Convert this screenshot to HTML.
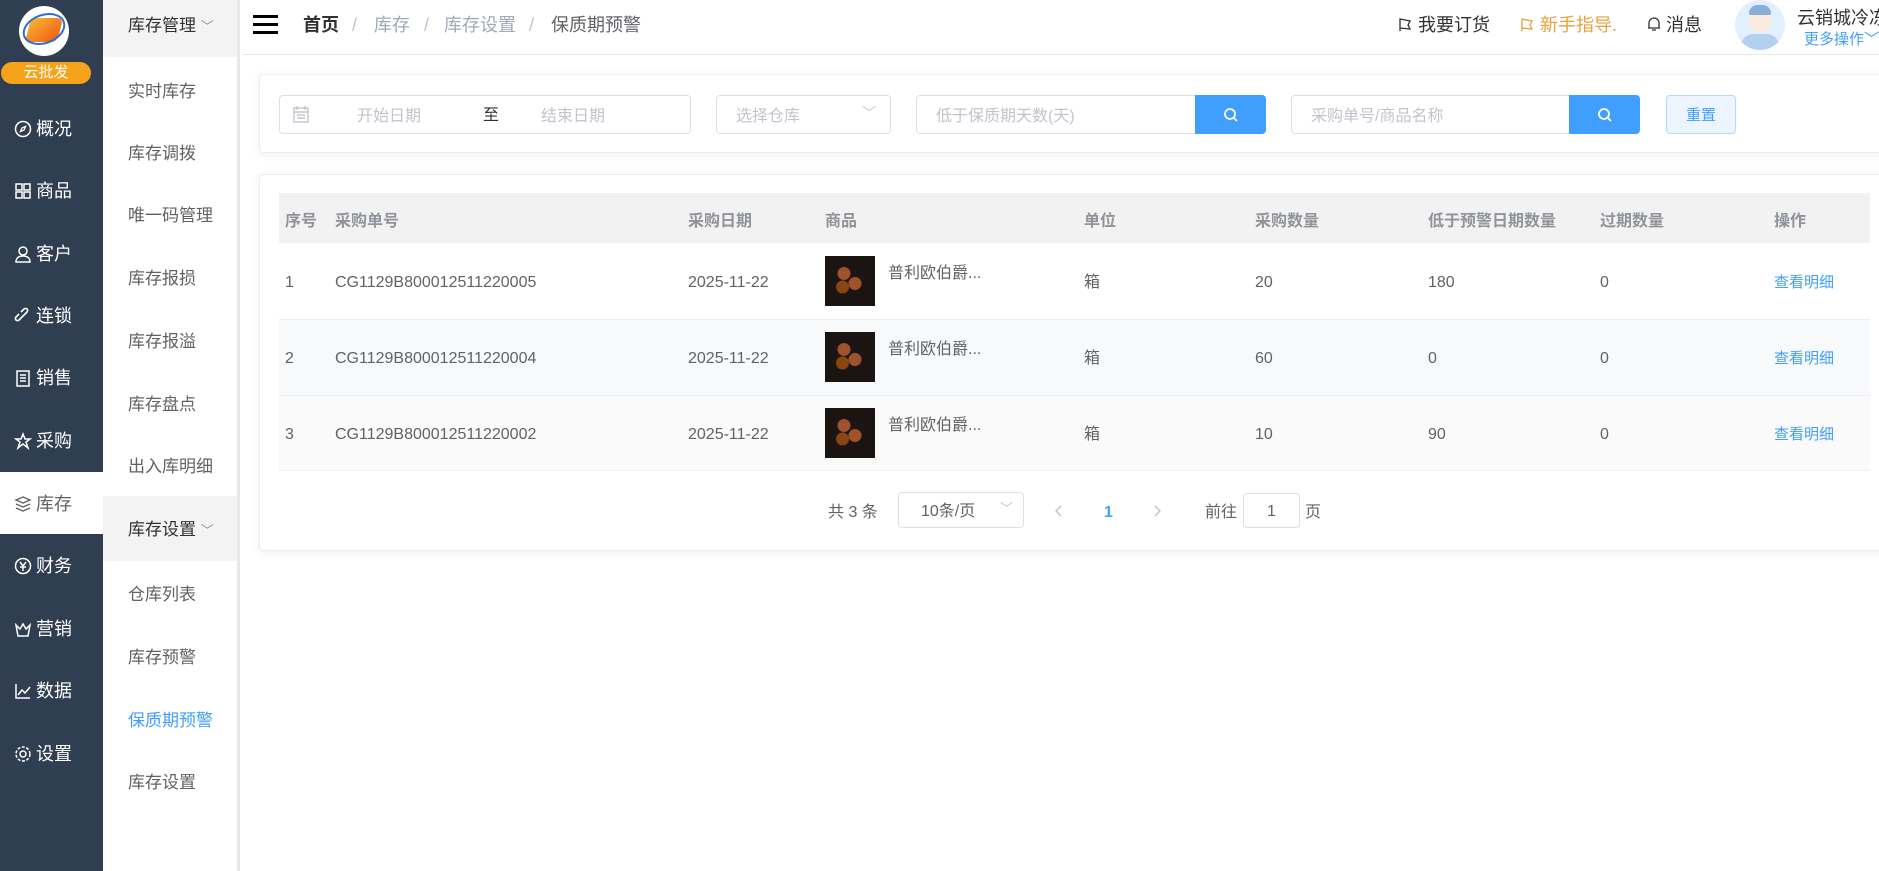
<!DOCTYPE html>
<html><head><meta charset="utf-8"><style>
*{margin:0;padding:0;box-sizing:border-box}
body{width:1879px;height:871px;overflow:hidden;background:#fff;font-family:"Liberation Sans","Noto Sans CJK SC",sans-serif;position:relative;color:#606266}
.a{position:absolute;white-space:nowrap}
#side{position:absolute;left:0;top:0;width:103px;height:871px;background:#2f3e51}
.mi{position:absolute;left:14px;font-size:18px;color:#fff;height:24px;line-height:24px;margin-top:1px}
.mi svg{vertical-align:-3px;margin-right:4px}
#sub{position:absolute;left:103px;top:0;width:137px;height:871px;background:#fff;border-right:3px solid #e8e8e8}
.si{position:absolute;left:25px;font-size:17px;color:#606266;line-height:24px;margin-top:2px}
.card{position:absolute;background:#fff;border:1px solid #ebeef5;border-radius:4px;box-shadow:0 2px 10px rgba(0,0,0,.06)}
.inp{position:absolute;border:1px solid #dcdfe6;border-radius:4px;background:#fff;font-size:16px;color:#c0c4cc;line-height:20px}
.btn{position:absolute;background:#409eff;border-radius:0 4px 4px 0}
.th{position:absolute;top:212px;font-size:16px;color:#909399;font-weight:bold;line-height:20px}
.td{position:absolute;font-size:16px;color:#606266;line-height:20px;margin-top:3px}
.thumb{position:absolute;left:825px;width:50px;height:50px;background:radial-gradient(circle at 38% 35%,#a0522d 0 6px,transparent 7px),radial-gradient(circle at 60% 55%,#a0522d 0 6px,transparent 7px),radial-gradient(circle at 35% 62%,#8b4513 0 6px,transparent 7px),#1a1412}
.lnk{position:absolute;left:1774px;font-size:15px;color:#409eff;line-height:20px;margin-top:3px}
.bc{position:absolute;top:13px;font-size:18px;line-height:24px;color:#a0a8b8}
.t3{margin-top:3px}
</style></head><body>
<div id="side">
 <div class="a" style="left:19px;top:6px;width:50px;height:50px;border-radius:50%;background:#fff"></div>
 <div class="a" style="left:28px;top:18px;width:32px;height:24px;border-radius:6px;background:linear-gradient(135deg,#f7b733,#f05a14);transform:skewX(-15deg)"></div>
 <div class="a" style="left:22px;top:14px;width:44px;height:30px;border:2px solid #2b6cd8;border-radius:50%;transform:rotate(-20deg)"></div>
 <div class="a" style="left:1px;top:62px;width:90px;height:22px;border-radius:11px;background:#f7a21b;color:#fff;font-size:15px;text-align:center;line-height:22px">云批发</div>
 <div class="mi" style="top:116px"><svg width="18" height="18" viewBox="0 0 18 18"><circle cx="9" cy="9" r="7.5" fill="none" stroke="#fff" stroke-width="1.5"/><path d="M11.5 6.5 8 8 6.5 11.5 10 10z" fill="none" stroke="#fff" stroke-width="1.3"/></svg>概况</div>
 <div class="mi" style="top:178px"><svg width="18" height="18" viewBox="0 0 18 18" fill="none" stroke="#fff" stroke-width="1.5"><rect x="2" y="2" width="6" height="6"/><rect x="10" y="2" width="6" height="6"/><rect x="2" y="10" width="6" height="6"/><rect x="10" y="10" width="6" height="6"/></svg>商品</div>
 <div class="mi" style="top:241px"><svg width="18" height="18" viewBox="0 0 18 18" fill="none" stroke="#fff" stroke-width="1.5"><circle cx="9" cy="6" r="4"/><path d="M2 17c0-4 3-6 7-6s7 2 7 6z"/></svg>客户</div>
 <div class="mi" style="top:303px"><svg width="18" height="18" viewBox="0 0 18 18" fill="none" stroke="#fff" stroke-width="1.6"><path d="M8 10l-3 3a2 2 0 0 1-3-3l3-3M10 8l3-3a2 2 0 0 0-3-3L7 5M7 11l4-4"/></svg>连锁</div>
 <div class="mi" style="top:365px"><svg width="18" height="18" viewBox="0 0 18 18" fill="none" stroke="#fff" stroke-width="1.5"><rect x="3" y="2" width="12" height="15"/><path d="M6 6h6M6 9h6M6 12h6"/></svg>销售</div>
 <div class="mi" style="top:428px"><svg width="18" height="18" viewBox="0 0 18 18" fill="none" stroke="#fff" stroke-width="1.5"><path d="M9 2l2 5h5l-4 3 2 6-5-4-5 4 2-6-4-3h5z"/></svg>采购</div>
 <div class="a" style="left:0;top:472px;width:103px;height:62px;background:#fff"></div>
 <div class="mi" style="top:491px;color:#606266"><svg width="18" height="18" viewBox="0 0 18 18" fill="none" stroke="#606266" stroke-width="1.4"><path d="M2 5l7-3 7 3-7 3zM2 9l7 3 7-3M2 13l7 3 7-3"/></svg>库存</div>
 <div class="mi" style="top:553px"><svg width="18" height="18" viewBox="0 0 18 18" fill="none" stroke="#fff" stroke-width="1.5"><circle cx="9" cy="9" r="7.5"/><path d="M6 5l3 4 3-4M9 9v5M6 10h6"/></svg>财务</div>
 <div class="mi" style="top:616px"><svg width="18" height="18" viewBox="0 0 18 18" fill="none" stroke="#fff" stroke-width="1.5"><path d="M2 5l4 4 3-5 3 5 4-4-2 11H4z"/></svg>营销</div>
 <div class="mi" style="top:678px"><svg width="18" height="18" viewBox="0 0 18 18" fill="none" stroke="#fff" stroke-width="1.5"><path d="M2 2v14h14M4 13l4-5 3 3 5-6"/></svg>数据</div>
 <div class="mi" style="top:741px"><svg width="18" height="18" viewBox="0 0 18 18" fill="none" stroke="#fff" stroke-width="1.5"><circle cx="9" cy="9" r="3"/><circle cx="9" cy="9" r="7" stroke-dasharray="3 1.5"/></svg>设置</div>
</div>
<div id="sub">
 <div class="a" style="left:0;top:0;width:134px;height:57px;background:#f3f3f3"></div>
 <div class="si" style="top:12px;color:#303133">库存管理 <span style="color:#999;font-size:13px">﹀</span></div>
 <div class="si" style="top:78px">实时库存</div>
 <div class="si" style="top:140px">库存调拨</div>
 <div class="si" style="top:202px">唯一码管理</div>
 <div class="si" style="top:265px">库存报损</div>
 <div class="si" style="top:328px">库存报溢</div>
 <div class="si" style="top:391px">库存盘点</div>
 <div class="si" style="top:453px">出入库明细</div>
 <div class="a" style="left:0;top:496px;width:134px;height:65px;background:#f3f3f3"></div>
 <div class="si" style="top:516px;color:#303133">库存设置 <span style="color:#999;font-size:13px">﹀</span></div>
 <div class="si" style="top:581px">仓库列表</div>
 <div class="si" style="top:644px">库存预警</div>
 <div class="si" style="top:707px;color:#409eff">保质期预警</div>
 <div class="si" style="top:769px">库存设置</div>
</div>
<div class="a" style="left:243px;top:0;width:1636px;height:55px;border-bottom:1px solid #e6e6e6;background:#fff"></div>
<div class="a" style="left:253px;top:15px;width:25px;height:3px;background:#000;box-shadow:0 8px 0 #000,0 16px 0 #000"></div>
<div class="bc" style="left:303px;color:#303133;font-weight:bold">首页</div>
<div class="bc" style="left:352px;color:#c0c4cc">/</div>
<div class="bc" style="left:374px">库存</div>
<div class="bc" style="left:424px;color:#c0c4cc">/</div>
<div class="bc" style="left:444px">库存设置</div>
<div class="bc" style="left:529px;color:#c0c4cc">/</div>
<div class="bc" style="left:551px;color:#606266">保质期预警</div>
<svg class="a" style="left:1398px;top:17px" width="14" height="15" viewBox="0 0 14 15" fill="none" stroke="#303133" stroke-width="1.3"><path d="M2 14V2l10 2-2 4 2 4-10-1"/></svg>
<div class="a" style="left:1418px;top:13px;font-size:18px;line-height:24px;color:#303133">我要订货</div>
<svg class="a" style="left:1520px;top:17px" width="14" height="15" viewBox="0 0 14 15" fill="none" stroke="#e6a23c" stroke-width="1.3"><path d="M2 14V2l10 2-2 4 2 4-10-1"/></svg>
<div class="a" style="left:1540px;top:13px;font-size:18px;line-height:24px;color:#e6a23c">新手指导.</div>
<div class="a" style="left:1647px;top:13px;font-size:18px;line-height:24px;color:#303133"><svg width="14" height="16" viewBox="0 0 14 16" fill="none" stroke="#303133" stroke-width="1.3" style="vertical-align:-1px"><path d="M2 12V7a5 5 0 0 1 10 0v5H1h12M5 14h4"/></svg> 消息</div>
<div class="a" style="left:1735px;top:0;width:50px;height:50px;border-radius:50%;background:#e2f0fd;overflow:hidden"><div class="a" style="left:15px;top:8px;width:20px;height:24px;border-radius:10px;background:#fde9dc"></div><div class="a" style="left:14px;top:5px;width:22px;height:10px;border-radius:10px 10px 2px 2px;background:#8aaed8"></div><div class="a" style="left:6px;top:34px;width:38px;height:20px;border-radius:12px 12px 0 0;background:#b3d0f0"></div></div>
<div class="a" style="left:1797px;top:4px;font-size:18px;color:#303133">云销城冷冻</div>
<div class="a" style="left:1804px;top:28px;font-size:15px;color:#409eff">更多操作﹀</div>

<div class="card" style="left:259px;top:74px;width:1640px;height:79px"></div>
<div class="inp" style="left:279px;top:95px;width:412px;height:39px"></div>
<svg class="a" style="left:293px;top:105px" width="16" height="18" viewBox="0 0 16 18" fill="none" stroke="#c0c4cc" stroke-width="1.4"><rect x="1" y="3" width="14" height="14"/><path d="M1 7h14M4 1v4M12 1v4M4 10h8M4 13h8"/></svg>
<div class="a" style="left:357px;top:107px;font-size:16px;line-height:20px;color:#c0c4cc">开始日期</div>
<div class="a" style="left:483px;top:106px;font-size:16px;line-height:20px;color:#303133">至</div>
<div class="a" style="left:541px;top:107px;font-size:16px;line-height:20px;color:#c0c4cc">结束日期</div>
<div class="inp" style="left:716px;top:95px;width:175px;height:39px;padding:11px 0 0 19px">选择仓库<span style="position:absolute;right:14px;top:7px;font-size:14px">﹀</span></div>
<div class="inp" style="left:916px;top:95px;width:281px;height:39px;padding:11px 0 0 19px;border-radius:4px 0 0 4px">低于保质期天数(天)</div>
<div class="btn" style="left:1195px;top:95px;width:71px;height:39px"><svg class="a" style="left:28px;top:12px" width="16" height="16" viewBox="0 0 16 16" fill="none" stroke="#fff" stroke-width="1.8"><circle cx="7" cy="7" r="5"/><path d="M11 11l3 3"/></svg></div>
<div class="inp" style="left:1291px;top:95px;width:280px;height:39px;padding:11px 0 0 19px;border-radius:4px 0 0 4px">采购单号/商品名称</div>
<div class="btn" style="left:1569px;top:95px;width:71px;height:39px"><svg class="a" style="left:28px;top:12px" width="16" height="16" viewBox="0 0 16 16" fill="none" stroke="#fff" stroke-width="1.8"><circle cx="7" cy="7" r="5"/><path d="M11 11l3 3"/></svg></div>
<div class="a" style="left:1666px;top:95px;width:70px;height:39px;background:#ecf5ff;border:1px solid #b3d8ff;border-radius:4px;color:#409eff;font-size:15px;text-align:center;line-height:39px">重置</div>

<div class="card" style="left:259px;top:174px;width:1640px;height:377px"></div>
<div class="a" style="left:279px;top:193px;width:1591px;height:50px;background:#f2f2f2"></div>
<div class="a" style="left:279px;top:319px;width:1591px;height:76px;background:#f8f9fb;border-top:1px solid #ebeef5"></div>
<div class="a" style="left:279px;top:395px;width:1591px;height:76px;background:#fafafa;border-top:1px solid #ebeef5;border-bottom:1px solid #ebeef5"></div>
<div class="th" style="left:285px">序号</div><div class="th" style="left:335px">采购单号</div><div class="th" style="left:688px">采购日期</div><div class="th" style="left:825px">商品</div><div class="th" style="left:1084px">单位</div><div class="th" style="left:1255px">采购数量</div><div class="th" style="left:1428px">低于预警日期数量</div><div class="th" style="left:1600px">过期数量</div><div class="th" style="left:1774px">操作</div>

<div class="td" style="left:285px;top:270px">1</div><div class="td" style="left:335px;top:270px">CG1129B800012511220005</div><div class="td" style="left:688px;top:270px">2025-11-22</div><div class="thumb" style="top:256px"></div><div class="td" style="left:888px;top:261px">普利欧伯爵...</div><div class="td" style="left:1084px;top:270px">箱</div><div class="td" style="left:1255px;top:270px">20</div><div class="td" style="left:1428px;top:270px">180</div><div class="td" style="left:1600px;top:270px">0</div><div class="lnk" style="top:270px">查看明细</div>
<div class="td" style="left:285px;top:346px">2</div><div class="td" style="left:335px;top:346px">CG1129B800012511220004</div><div class="td" style="left:688px;top:346px">2025-11-22</div><div class="thumb" style="top:332px"></div><div class="td" style="left:888px;top:337px">普利欧伯爵...</div><div class="td" style="left:1084px;top:346px">箱</div><div class="td" style="left:1255px;top:346px">60</div><div class="td" style="left:1428px;top:346px">0</div><div class="td" style="left:1600px;top:346px">0</div><div class="lnk" style="top:346px">查看明细</div>
<div class="td" style="left:285px;top:422px">3</div><div class="td" style="left:335px;top:422px">CG1129B800012511220002</div><div class="td" style="left:688px;top:422px">2025-11-22</div><div class="thumb" style="top:408px"></div><div class="td" style="left:888px;top:413px">普利欧伯爵...</div><div class="td" style="left:1084px;top:422px">箱</div><div class="td" style="left:1255px;top:422px">10</div><div class="td" style="left:1428px;top:422px">90</div><div class="td" style="left:1600px;top:422px">0</div><div class="lnk" style="top:422px">查看明细</div>

<div class="a" style="left:828px;top:503px;font-size:16px;line-height:20px;color:#606266">共 3 条</div>
<div class="inp" style="left:898px;top:492px;width:126px;height:36px;color:#606266;padding:9px 0 0 22px">10条/页<span style="position:absolute;right:10px;top:6px;font-size:13px;color:#c0c4cc">﹀</span></div>
<svg class="a" style="left:1055px;top:505px" width="8" height="12" viewBox="0 0 8 12" fill="none" stroke="#c0c4cc" stroke-width="1.5"><path d="M6 1 1 6l5 5"/></svg>
<div class="a" style="left:1104px;top:503px;font-size:16px;line-height:20px;color:#409eff;font-weight:bold">1</div>
<svg class="a" style="left:1153px;top:505px" width="8" height="12" viewBox="0 0 8 12" fill="none" stroke="#c0c4cc" stroke-width="1.5"><path d="M2 1l5 5-5 5"/></svg>
<div class="a" style="left:1205px;top:503px;font-size:16px;line-height:20px;color:#606266">前往</div>
<div class="inp" style="left:1243px;top:493px;width:57px;height:35px;color:#606266;text-align:center;padding-top:8px">1</div>
<div class="a" style="left:1305px;top:503px;font-size:16px;line-height:20px;color:#606266">页</div>
</body></html>
